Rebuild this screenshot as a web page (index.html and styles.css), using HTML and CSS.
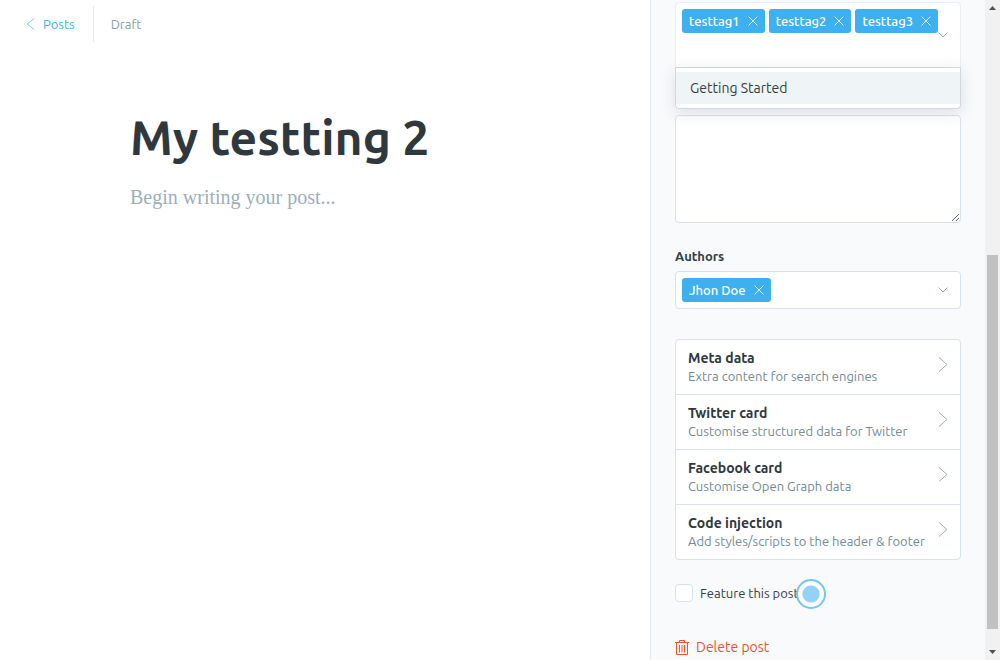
FILE: index.html
```html
<!DOCTYPE html>
<html lang="en">
<head>
<meta charset="utf-8">
<meta name="viewport" content="width=device-width, initial-scale=1">
<title>My testting 2</title>
<link rel="stylesheet" href="styles.css">
</head>
<body>
<svg class="defs" aria-hidden="true">
  <symbol id="close" viewBox="0 0 10 10"><path d="M.5.5l9 9M9.5.5l-9 9"/></symbol>
  <symbol id="down" viewBox="0 0 10 6"><path d="M.5.5L5 5 9.500.5"/></symbol>
  <symbol id="right" viewBox="0 0 9 15"><path d="M.5.5l8 7-8 7"/></symbol>
  <symbol id="left" viewBox="0 0 8 12"><path d="M7.500.5L.8 6l6.700 5.500"/></symbol>
</svg>
<main class="editor">
  <header class="toolbar">
    <a class="back" href="#"><svg class="icon-left"><use href="#left"/></svg>Posts</a>
    <span class="status">Draft</span>
  </header>
  <div class="document">
    <input class="title" type="text" value="My testting 2" aria-label="Post title">
    <textarea class="body" placeholder="Begin writing your post..." aria-label="Post body"></textarea>
  </div>
</main>
<aside class="settings">
  <div class="panel">
    <div class="select tags">
      <div class="tokens">
        <button class="token" type="button">testtag1<svg class="icon-close"><use href="#close"/></svg></button>
        <button class="token" type="button">testtag2<svg class="icon-close"><use href="#close"/></svg></button>
        <button class="token" type="button">testtag3<svg class="icon-close"><use href="#close"/></svg></button>
        <input class="token-input" type="text" aria-label="Tags">
      </div>
      <svg class="icon-down"><use href="#down"/></svg>
      <div class="dropdown"><button class="option" type="button">Getting Started</button></div>
    </div>
    <textarea class="excerpt" aria-label="Excerpt"></textarea>
    <div class="field">
      <label class="field-label" for="authors">Authors</label>
      <div class="select">
        <div class="tokens">
          <button class="token" type="button">Jhon Doe<svg class="icon-close"><use href="#close"/></svg></button>
          <input class="token-input" id="authors" type="text">
        </div>
        <svg class="icon-down"><use href="#down"/></svg>
      </div>
    </div>
    <nav class="sections">
      <button class="section" type="button"><span><b>Meta data</b><small>Extra content for search engines</small></span><svg class="icon-right"><use href="#right"/></svg></button>
      <button class="section" type="button"><span><b>Twitter card</b><small>Customise structured data for Twitter</small></span><svg class="icon-right"><use href="#right"/></svg></button>
      <button class="section" type="button"><span><b>Facebook card</b><small>Customise Open Graph data</small></span><svg class="icon-right"><use href="#right"/></svg></button>
      <button class="section" type="button"><span><b>Code injection</b><small>Add styles/scripts to the header &amp; footer</small></span><svg class="icon-right"><use href="#right"/></svg></button>
    </nav>
    <label class="feature"><input type="checkbox"><span class="feature-text">Feature this post<i class="pointer"></i></span></label>
    <button class="delete" type="button">
      <svg class="icon-trash" viewBox="0 0 14 15"><path d="M0 2.500h14M4.500 2V.5h5V2M1.500 3v11.500h11V3M4.500 5v7.500M7 5v7.500M9.500 5v7.500"/></svg>Delete post
    </button>
  </div>
  <div class="rail" aria-hidden="true">
    <svg class="arrow" viewBox="0 0 7 4"><path d="M0 4L3.500 0 7 4z"/></svg>
    <div class="track"><div class="thumb"></div></div>
    <svg class="arrow" viewBox="0 0 7 4"><path d="M0 0l3.500 4L7 0z"/></svg>
  </div>
</aside>
</body>
</html>
```
FILE: styles.css
```css
* { box-sizing: border-box; }
body {
  margin: 0;
  height: 100vh;
  display: flex;
  overflow: hidden;
  background: #fff;
  color: #343f44;
  font: 13px/18px Ubuntu, "Noto Sans", "Open Sans", sans-serif;
}
button, input, textarea { font: inherit; color: inherit; }
button { border: 0; padding: 0; background: none; cursor: pointer; }
input, textarea { outline: 0; }
svg { flex: none; fill: none; stroke: currentColor; }
.defs { position: absolute; width: 0; height: 0; }

.editor { flex: 1; min-width: 0; display: flex; flex-direction: column; }
.toolbar { display: flex; padding: 6px 26px; }
.back {
  display: flex;
  align-items: center;
  gap: 8px;
  height: 36px;
  padding-right: 18px;
  border-right: 1px solid #dfe9f0;
  color: #3eb0ef;
  text-decoration: none;
}
.icon-left { width: 9px; height: 12px; opacity: .7; }
.status { padding-left: 17px; line-height: 36px; color: #88a0ac; }
.document {
  flex: 1;
  display: flex;
  flex-direction: column;
  gap: 16px;
  padding: 59px 60px 0 130px;
}
.title {
  width: 100%;
  height: 60px;
  border: 0;
  padding: 0;
  font-size: 48px;
  font-weight: 700;
  line-height: 60px;
  color: #2e383d;
}
.body {
  flex: 1;
  border: 0;
  padding: 0;
  resize: none;
  font: 20px/28px "Liberation Serif", serif;
}
.body::placeholder { color: #9bafb8; opacity: 1; }

.settings {
  flex: none;
  width: 350px;
  display: flex;
  border-left: 1px solid #dfe9f0;
  background: #f8fafc;
}
.panel { flex: 1; min-width: 0; padding: 2px 24px 0; overflow: hidden; }
.select {
  position: relative;
  display: flex;
  align-items: center;
  padding: 6px 12px 6px 6px;
  border: 1px solid #d6e3eb;
  border-radius: 4px;
  background: #fff;
}
.tags { min-height: 66px; margin-bottom: 47px; border-color: #e9eff3; border-radius: 4px 4px 0 0; }
.tokens { flex: 1; display: flex; flex-wrap: wrap; gap: 4px; margin-right: -6px; }
.tags .tokens { align-self: flex-start; }
.token {
  display: flex;
  align-items: center;
  gap: 8px;
  height: 24px;
  padding: 0 7px;
  border-radius: 3px;
  background: #3eb0ef;
  color: #fff;
  font-size: 13px;
  font-weight: 500;
}
.icon-close { width: 10px; height: 10px; opacity: .8; }
.token-input { flex: 1; min-width: 20px; height: 24px; border: 0; padding: 0; background: none; }
.icon-down { width: 10px; height: 6px; color: #9bafb8; }
.dropdown {
  position: absolute;
  z-index: 1;
  top: 100%;
  left: -1px;
  right: -1px;
  padding: 4px 0;
  border: 1px solid #cfd8de;
  border-radius: 0 0 4px 4px;
  background: #fff;
  box-shadow: 0 4px 16px rgba(39, 44, 73, .13);
}
.option {
  display: block;
  width: 100%;
  height: 32px;
  padding: 0 14px;
  background: #eff4f7;
  font-size: 14px;
  text-align: left;
}
.excerpt {
  display: block;
  width: 100%;
  height: 108px;
  border: 1px solid #d6e3eb;
  border-radius: 4px;
  background: #fff;
}
.field { margin: 24px 0 30px; }
.field-label { display: block; margin-bottom: 6px; font-weight: 700; }
.sections { border: 1px solid #d6e3eb; border-radius: 4px; background: #fff; }
.section {
  display: flex;
  align-items: flex-start;
  justify-content: space-between;
  width: 100%;
  height: 55px;
  padding: 9px 12px;
  text-align: left;
}
.section + .section { border-top: 1px solid #d6e3eb; }
.section:first-child { height: 54px; }
.section b, .section small { display: block; line-height: 18px; }
.section b { font-size: 14px; color: #2e383d; }
.section small { font-size: 13px; color: #738a94; }
.icon-right { width: 10px; height: 15px; margin-top: 8px; color: #9bafb8; }
.feature { display: flex; align-items: center; gap: 7px; margin: 24px 0 35px; }
.feature input {
  appearance: none;
  width: 18px;
  height: 18px;
  margin: 0;
  border: 1px solid #d6e3eb;
  border-radius: 4px;
  background: #fff;
}
.feature-text { position: relative; }
.pointer {
  position: absolute;
  top: -5px;
  right: -27px;
  width: 30px;
  height: 30px;
  border: 2px solid #74c5f0;
  border-radius: 50%;
  background: radial-gradient(circle, #93d2f5 0 8px, rgba(255, 255, 255, .5) 9px);
}
.delete { display: flex; align-items: center; gap: 7px; color: #f05230; font-size: 14px; line-height: 20px; }
.icon-trash { width: 14px; height: 15px; }

.rail {
  flex: none;
  width: 15px;
  display: flex;
  flex-direction: column;
  align-items: center;
  gap: 6px;
  padding: 6px 0;
  background: #f1f1f1;
}
.arrow { width: 7px; height: 4px; fill: #505050; stroke: none; }
.track { flex: 1; width: 11px; display: flex; flex-direction: column; justify-content: flex-end; padding-bottom: 15px; }
.thumb { height: 61%; background: #c1c1c1; }
```
